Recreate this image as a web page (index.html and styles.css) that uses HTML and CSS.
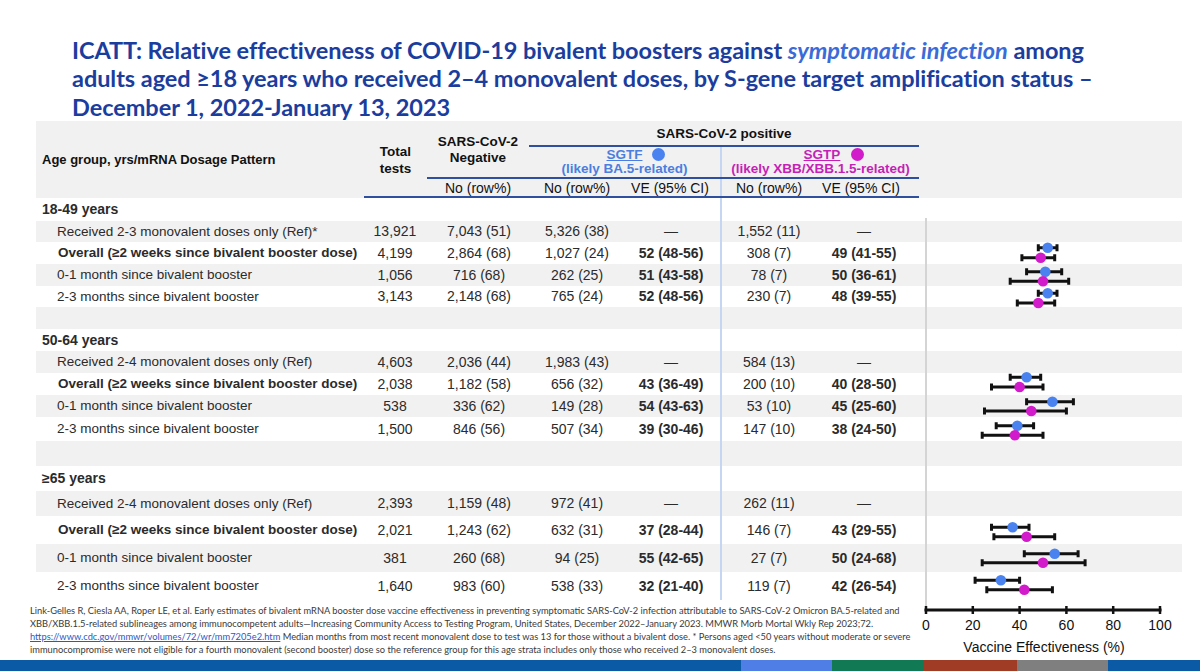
FILE: index.html
```html
<!DOCTYPE html>
<html lang="en">
<head>
<meta charset="utf-8">
<title>ICATT bivalent booster effectiveness</title>
<link rel="stylesheet" href="styles.css">
</head>
<body>
<div class="page">
  <h1 class="title">ICATT: Relative effectiveness of COVID-19 bivalent boosters against <em>symptomatic infection</em> among<br>adults aged ≥18 years who received 2–4 monovalent doses, by S-gene target amplification status –<br>December 1, 2022-January 13, 2023</h1>

  <div class="table">
    <div class="thead">
      <div class="h-age">Age group, yrs/mRNA Dosage Pattern</div>
      <div class="h-total">Total<br>tests</div>
      <div class="h-neg">SARS-CoV-2<br>Negative</div>
      <div class="h-pos">SARS-CoV-2 positive</div>
      <div class="rule rule-a"></div>
      <div class="h-var h-sgtf"><span class="h-name"><u>SGTF</u><i class="dot dot-blue"></i></span><span>(likely BA.5-related)</span></div>
      <div class="h-var h-sgtp"><span class="h-name"><u>SGTP</u><i class="dot dot-mag"></i></span><span>(likely XBB/XBB.1.5-related)</span></div>
      <div class="rule rule-b"></div>
      <div class="h-sub h-negno">No (row%)</div>
      <div class="h-sub h-fno">No (row%)</div>
      <div class="h-sub h-fve">VE (95% CI)</div>
      <div class="h-sub h-pno">No (row%)</div>
      <div class="h-sub h-pve">VE (95% CI)</div>
      <div class="rule rule-c"></div>
    </div>

    <div class="tbody">
      <div class="row h23"><div class="lab grp">18-49 years</div><div></div><div></div><div></div><div></div><div class="sep"></div><div></div></div>
      <div class="row h21 alt"><div class="lab">Received 2-3 monovalent doses only (Ref)*</div><div>13,921</div><div>7,043 (51)</div><div>5,326 (38)</div><div class="fve n">—</div><div class="sep">1,552 (11)</div><div class="n">—</div></div>
      <div class="row h22"><div class="lab b">Overall (≥2 weeks since bivalent booster dose)</div><div>4,199</div><div>2,864 (68)</div><div>1,027 (24)</div><div class="fve">52 (48-56)</div><div class="sep">308 (7)</div><div class="pve">49 (41-55)</div></div>
      <div class="row h22 alt"><div class="lab">0-1 month since bivalent booster</div><div>1,056</div><div>716 (68)</div><div>262 (25)</div><div class="fve">51 (43-58)</div><div class="sep">78 (7)</div><div class="pve">50 (36-61)</div></div>
      <div class="row h21"><div class="lab">2-3 months since bivalent booster</div><div>3,143</div><div>2,148 (68)</div><div>765 (24)</div><div class="fve">52 (48-56)</div><div class="sep">230 (7)</div><div class="pve">48 (39-55)</div></div>
      <div class="row h22 alt"><div class="lab"></div><div></div><div></div><div></div><div></div><div class="sep"></div><div></div></div>

      <div class="row h22"><div class="lab grp">50-64 years</div><div></div><div></div><div></div><div></div><div class="sep"></div><div></div></div>
      <div class="row h22 alt"><div class="lab">Received 2-4 monovalent doses only (Ref)</div><div>4,603</div><div>2,036 (44)</div><div>1,983 (43)</div><div class="fve n">—</div><div class="sep">584 (13)</div><div class="n">—</div></div>
      <div class="row h22"><div class="lab b">Overall (≥2 weeks since bivalent booster dose)</div><div>2,038</div><div>1,182 (58)</div><div>656 (32)</div><div class="fve">43 (36-49)</div><div class="sep">200 (10)</div><div class="pve">40 (28-50)</div></div>
      <div class="row h22 alt"><div class="lab">0-1 month since bivalent booster</div><div>538</div><div>336 (62)</div><div>149 (28)</div><div class="fve">54 (43-63)</div><div class="sep">53 (10)</div><div class="pve">45 (25-60)</div></div>
      <div class="row h24"><div class="lab">2-3 months since bivalent booster</div><div>1,500</div><div>846 (56)</div><div>507 (34)</div><div class="fve">39 (30-46)</div><div class="sep">147 (10)</div><div class="pve">38 (24-50)</div></div>
      <div class="row h25 alt"><div class="lab"></div><div></div><div></div><div></div><div></div><div class="sep"></div><div></div></div>

      <div class="row h25"><div class="lab grp">≥65 years</div><div></div><div></div><div></div><div></div><div class="sep"></div><div></div></div>
      <div class="row h25 alt"><div class="lab">Received 2-4 monovalent doses only (Ref)</div><div>2,393</div><div>1,159 (48)</div><div>972 (41)</div><div class="fve n">—</div><div class="sep">262 (11)</div><div class="n">—</div></div>
      <div class="row h28"><div class="lab b">Overall (≥2 weeks since bivalent booster dose)</div><div>2,021</div><div>1,243 (62)</div><div>632 (31)</div><div class="fve">37 (28-44)</div><div class="sep">146 (7)</div><div class="pve">43 (29-55)</div></div>
      <div class="row h28 alt"><div class="lab">0-1 month since bivalent booster</div><div>381</div><div>260 (68)</div><div>94 (25)</div><div class="fve">55 (42-65)</div><div class="sep">27 (7)</div><div class="pve">50 (24-68)</div></div>
      <div class="row h28"><div class="lab">2-3 months since bivalent booster</div><div>1,640</div><div>983 (60)</div><div>538 (33)</div><div class="fve">32 (21-40)</div><div class="sep">119 (7)</div><div class="pve">42 (26-54)</div></div>
    </div>
  </div>

  <p class="footer">Link-Gelles R, Ciesla AA, Roper LE, et al. Early estimates of bivalent mRNA booster dose vaccine effectiveness in preventing symptomatic SARS-CoV-2 infection attributable to SARS-CoV-2 Omicron BA.5-related and<br>XBB/XBB.1.5-related sublineages among immunocompetent adults—Increasing Community Access to Testing Program, United States, December 2022–January 2023. MMWR Morb Mortal Wkly Rep 2023;72.<br><a href="#">https://www.cdc.gov/mmwr/volumes/72/wr/mm7205e2.htm</a> Median months from most recent monovalent dose to test was 13 for those without a bivalent dose. * Persons aged &lt;50 years without moderate or severe<br>immunocompromise were not eligible for a fourth monovalent (second booster) dose so the reference group for this age strata includes only those who received 2–3 monovalent doses.</p>

  <div class="brand-bar"><span class="seg s1"></span><span class="seg s2"></span><span class="seg s3"></span><span class="seg s4"></span><span class="seg s5"></span><span class="seg s6"></span></div>

  <svg class="forest" viewBox="900 200 300 460" width="300" height="460" aria-label="Forest plot of vaccine effectiveness">
    <line x1="926" y1="218" x2="926" y2="610" stroke="#d4d4d4" stroke-width="2"/>
    <g stroke="#111" stroke-width="3" fill="none">
      <path d="M1038.3 247.7H1057M1038.3 244.2V251.2M1057 244.2V251.2"/>
      <path d="M1021.9 257.7H1054.7M1021.9 254.2V261.2M1054.7 254.2V261.2"/>
      <path d="M1026.6 271.7H1061.7M1026.6 268.2V275.2M1061.7 268.2V275.2"/>
      <path d="M1010.2 281.3H1068.7M1010.2 277.8V284.8M1068.7 277.8V284.8"/>
      <path d="M1038.3 293.3H1057M1038.3 289.8V296.8M1057 289.8V296.8"/>
      <path d="M1017.3 303H1054.7M1017.3 299.5V306.5M1054.7 299.5V306.5"/>
      <path d="M1010.2 377.3H1040.7M1010.2 373.8V380.8M1040.7 373.8V380.8"/>
      <path d="M991.5 387H1043M991.5 383.5V390.5M1043 383.5V390.5"/>
      <path d="M1026.6 401.7H1073.4M1026.6 398.2V405.2M1073.4 398.2V405.2"/>
      <path d="M984.5 411H1066.4M984.5 407.5V414.5M1066.4 407.5V414.5"/>
      <path d="M996.2 425.7H1033.6M996.2 422.2V429.2M1033.6 422.2V429.2"/>
      <path d="M982.2 435.3H1043M982.2 431.8V438.8M1043 431.8V438.8"/>
      <path d="M991.5 527.3H1029M991.5 523.8V530.8M1029 523.8V530.8"/>
      <path d="M993.9 536.7H1054.7M993.9 533.2V540.2M1054.7 533.2V540.2"/>
      <path d="M1024.3 553.7H1078.1M1024.3 550.2V557.2M1078.1 550.2V557.2"/>
      <path d="M982.2 562.7H1085.1M982.2 559.2V566.2M1085.1 559.2V566.2"/>
      <path d="M975.1 580.3H1019.6M975.1 576.8V583.8M1019.6 576.8V583.8"/>
      <path d="M986.8 589.7H1052.4M986.8 586.2V593.2M1052.4 586.2V593.2"/>
    </g>
    <g fill="#4a83ef">
      <circle cx="1047.7" cy="247.7" r="5.3"/>
      <circle cx="1045.3" cy="271.7" r="5.3"/>
      <circle cx="1047.7" cy="293.3" r="5.3"/>
      <circle cx="1026.6" cy="377.3" r="5.3"/>
      <circle cx="1052.4" cy="401.7" r="5.3"/>
      <circle cx="1017.3" cy="425.7" r="5.3"/>
      <circle cx="1012.6" cy="527.3" r="5.3"/>
      <circle cx="1054.7" cy="553.7" r="5.3"/>
      <circle cx="1000.9" cy="580.3" r="5.3"/>
    </g>
    <g fill="#d21bcb">
      <circle cx="1040.7" cy="257.7" r="5.3"/>
      <circle cx="1043" cy="281.3" r="5.3"/>
      <circle cx="1038.3" cy="303" r="5.3"/>
      <circle cx="1019.6" cy="387" r="5.3"/>
      <circle cx="1031.3" cy="411" r="5.3"/>
      <circle cx="1014.9" cy="435.3" r="5.3"/>
      <circle cx="1026.6" cy="536.7" r="5.3"/>
      <circle cx="1043" cy="562.7" r="5.3"/>
      <circle cx="1024.3" cy="589.7" r="5.3"/>
    </g>
    <g stroke="#111" stroke-width="2.5">
      <line x1="924.5" y1="610" x2="1161.5" y2="610" stroke-width="3"/>
      <line x1="926" y1="606" x2="926" y2="614"/>
      <line x1="972.8" y1="606" x2="972.8" y2="614"/>
      <line x1="1019.6" y1="606" x2="1019.6" y2="614"/>
      <line x1="1066.4" y1="606" x2="1066.4" y2="614"/>
      <line x1="1113.2" y1="606" x2="1113.2" y2="614"/>
      <line x1="1160" y1="606" x2="1160" y2="614"/>
    </g>
    <g class="axis-text" text-anchor="middle">
      <text x="926" y="630">0</text>
      <text x="972.8" y="630">20</text>
      <text x="1019.6" y="630">40</text>
      <text x="1066.4" y="630">60</text>
      <text x="1113.2" y="630">80</text>
      <text x="1160" y="630">100</text>
      <text x="1044" y="652">Vaccine Effectiveness (%)</text>
    </g>
  </svg>
</div>
</body>
</html>
```

FILE: styles.css
```css
* { box-sizing: border-box; }
html, body { margin: 0; padding: 0; background: #fff; }
body { font-family: "Liberation Sans", Arial, sans-serif; color: #2b2b2b; }

.page {
  position: relative;
  width: 1200px;
  height: 671px;
  overflow: hidden;
  display: flex;
  flex-direction: column;
  background: #fff;
}

.title {
  margin: 0;
  padding: 36px 0 0 72px;
  font-family: Lato, "Liberation Sans", sans-serif;
  font-weight: 700;
  font-size: 23.5px;
  line-height: 28.33px;
  color: #1a3d9e;
  white-space: nowrap;
  letter-spacing: -0.05px;
}
.title em { font-weight: 700; font-style: italic; color: #3a6bd8; }

.table { margin-left: 36px; width: 1146px; }

/* header */
.thead {
  display: grid;
  grid-template-columns: 328px 63px 102px 96px 95px 96px 103px 1fr;
  grid-template-rows: 24px 2px 30px 2px 17px 2px;
  background: #f1f1f1;
  color: #111;
  font-size: 13.5px;
}
.thead > div { display: flex; align-items: center; justify-content: center; text-align: center; white-space: nowrap; }
.h-age { grid-column: 1; grid-row: 1 / 7; justify-content: flex-start !important; padding-left: 6px; font-weight: 700; font-size: 13px; }
.h-total { grid-column: 2; grid-row: 1 / 7; font-weight: 700; line-height: 17px; padding-top: 1px; }
.h-neg { grid-column: 3; grid-row: 1 / 4; font-weight: 700; line-height: 16px; padding-top: 2px; }
.h-pos { grid-column: 4 / 8; grid-row: 1; font-weight: 700; font-size: 13.5px; padding-top: 2px; }
.rule { background: #2e509f; }
.rule-a { grid-column: 4 / 8; grid-row: 2; }
.rule-b { grid-column: 3 / 8; grid-row: 4; }
.rule-c { grid-column: 2 / 8; grid-row: 6; }
.h-var {
  flex-direction: column;
  justify-content: flex-end !important;
  font-weight: 700;
  font-size: 13.5px;
  line-height: 14px;
  padding-bottom: 1px;
}
.h-name { display: flex; align-items: center; }
.h-sgtf { grid-column: 4 / 6; grid-row: 3; color: #4a7fe0; }
.h-sgtf .h-name { padding-left: 22px; }
.h-sgtp { grid-column: 6 / 8; grid-row: 3; color: #c61fb8; border-left: 2px solid #c5d6f3; }
.h-sgtp .h-name { padding-left: 27px; }
.dot { display: inline-block; width: 13px; height: 13px; border-radius: 50%; margin-left: 9px; }
.dot-blue { background: #4a83ef; }
.dot-mag { background: #d21bcb; margin-left: 11px; }
.h-sub { font-size: 14px; padding-top: 1px; }
.h-negno { grid-column: 3; grid-row: 5; }
.h-fno { grid-column: 4; grid-row: 5; }
.h-fve { grid-column: 5; grid-row: 5; padding-right: 5px; }
.h-pno { grid-column: 6; grid-row: 5; border-left: 2px solid #c5d6f3; }
.h-pve { grid-column: 7; grid-row: 5; padding-right: 13px; }

/* body */
.row {
  display: grid;
  grid-template-columns: 319px 80px 88px 108px 89px 96px 96px 1fr;
  font-size: 14px;
  color: #2b2b2b;
}
.row.alt { background: #f1f1f1; }
.row > div { display: flex; align-items: center; justify-content: center; white-space: nowrap; }
.row > .lab { justify-content: flex-start; padding-left: 21px; font-size: 13.5px; }
.row > .lab.b { font-weight: 700; padding-left: 22px; font-size: 13.5px; }
.row > .lab.grp { font-weight: 700; padding-left: 6px; font-size: 14px; }
.fve { font-weight: 700; padding-right: 9px; }
.fve.n, .n { font-weight: 400; }
.pve { font-weight: 700; }
.sep { border-left: 2px solid #c5d6f3; }

.h21 { height: 21px; }
.h22 { height: 22px; }
.h23 { height: 23px; }
.h24 { height: 24px; }
.h25 { height: 25px; }
.h28 { height: 28px; }

/* footer */
.footer {
  margin: 4px 0 0;
  padding-left: 30px;
  font-family: Lato, "Liberation Sans", sans-serif;
  font-size: 9.3px;
  line-height: 13px;
  color: #3a3a3a;
  white-space: nowrap;
}
.footer a { color: #2b58c4; text-decoration: underline; }

.brand-bar { margin-top: auto; height: 11px; display: flex; }
.seg { display: block; height: 100%; }
.s1 { width: 741px; background: #0b5aa6; }
.s2 { width: 91px; background: #4f7fe6; }
.s3 { width: 92px; background: #117a55; }
.s4 { width: 93px; background: #a03c26; }
.s5 { width: 91px; background: #7f7f7f; }
.s6 { width: 92px; background: #0b5aa6; }

/* forest plot overlay */
.forest { position: absolute; left: 900px; top: 200px; }
.axis-text text { font-family: "Liberation Sans", Arial, sans-serif; font-size: 14px; fill: #111; }
```
